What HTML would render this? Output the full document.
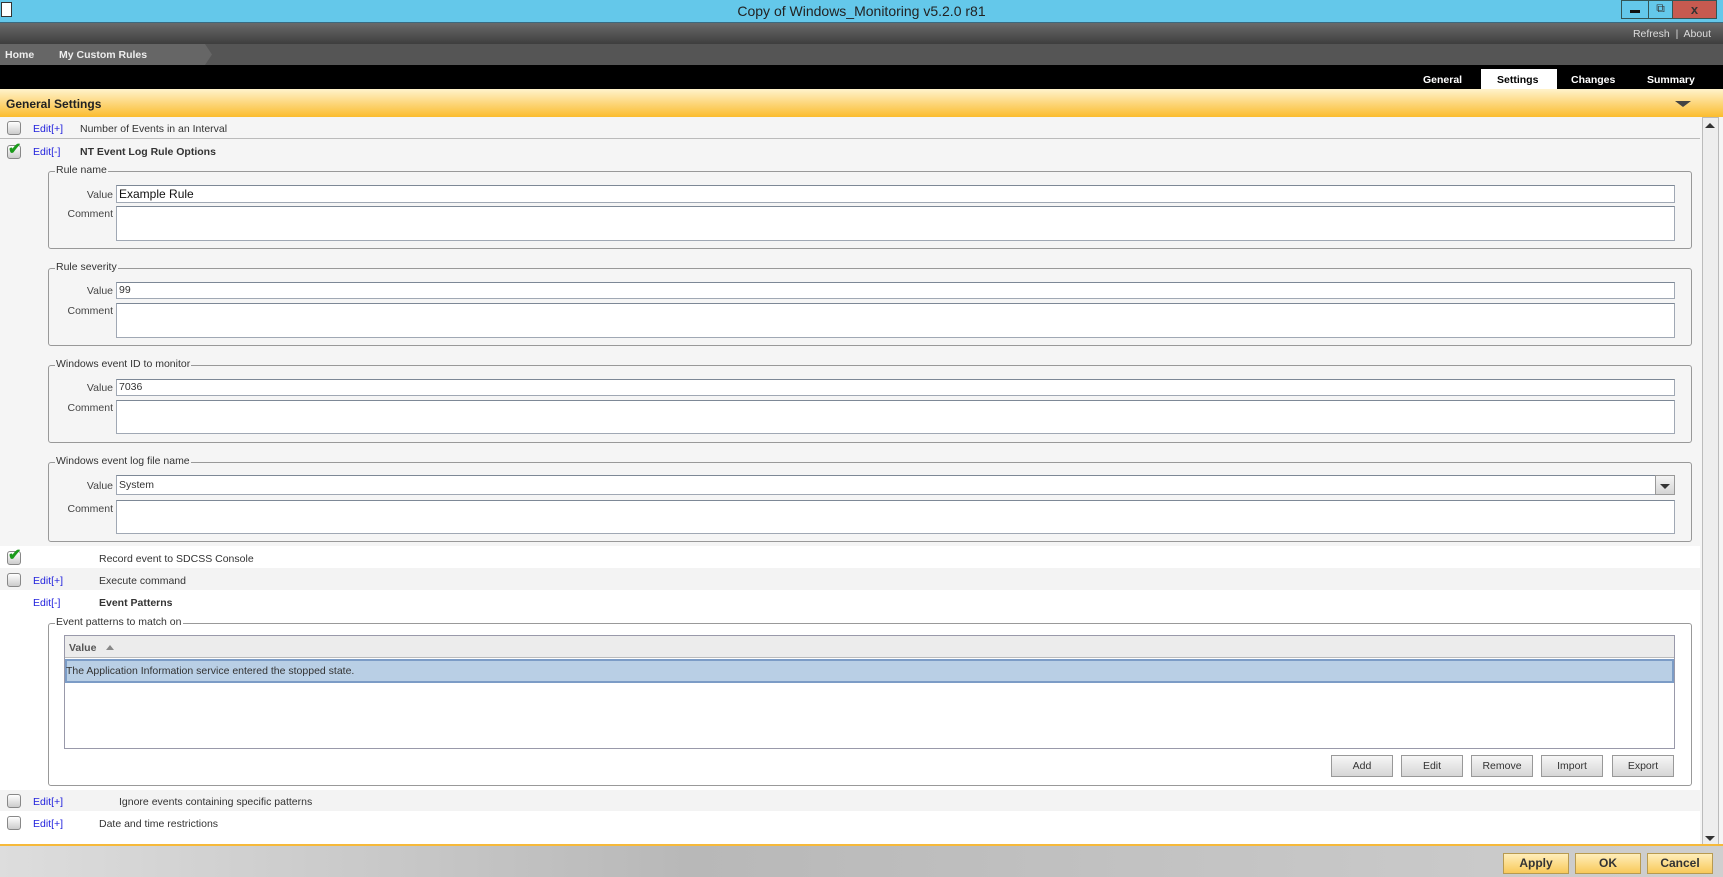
<!DOCTYPE html>
<html><head><meta charset="utf-8"><style>
*{box-sizing:border-box;margin:0;padding:0}
body{width:1723px;height:877px;position:relative;overflow:hidden;background:#f5f5f5;font-family:"Liberation Sans",Arial,sans-serif;font-size:10.5px;color:#333}
.a{position:absolute}
.cb{position:absolute;width:14px;height:14px;border:1px solid #888;border-radius:3px;background:linear-gradient(#fff,#ccc)}
.ck{position:absolute;color:#1a9a1a;font-size:16px;font-weight:bold;line-height:14px}
.ed{position:absolute;color:#2222dd;font-size:10.5px}
.lb{position:absolute;font-size:10.5px;color:#333}
.fs{position:absolute;left:48px;width:1644px;border:1px solid #999;border-radius:3px}
.lg{position:absolute;top:-8px;left:6px;background:#f5f5f5;padding:0 1px;font-size:10.5px;color:#333}
.inp{position:absolute;left:116px;width:1559px;background:#fff;border:1px solid #a0a8b4;border-top-color:#7d8896;font-size:10.5px;padding-left:2px}
.rl{position:absolute;width:113px;text-align:right;font-size:10.5px;color:#444}
.btn{position:absolute;top:755px;height:22px;width:62px;border:1px solid #999;background:linear-gradient(#f6f6f6,#d6d6d6);text-align:center;line-height:20px;font-size:10.5px;color:#333}
.ob{position:absolute;top:853px;height:21px;width:66px;border:1px solid #b89a50;background:linear-gradient(#ffeebb,#f8c95a);text-align:center;line-height:19px;font-size:12px;font-weight:bold;color:#333}
</style></head><body>
<div class="a" style="left:0;top:0;width:1723px;height:23px;background:#64c8ea;border-bottom:1px solid #3a6a80"></div>
<div class="a" style="left:1px;top:2px;width:11px;height:15px;border:1px solid #333;background:#fff"></div>
<div class="a" style="left:0;top:3px;width:1723px;text-align:center;font-size:14px;color:#222">Copy of Windows_Monitoring v5.2.0 r81</div>
<div class="a" style="left:1621px;top:0;width:28px;height:19px;border:1px solid #355"></div>
<div class="a" style="left:1630px;top:10px;width:10px;height:3px;background:#111"></div>
<div class="a" style="left:1648px;top:0;width:25px;height:19px;border:1px solid #355;text-align:center;font-size:12px">⧉</div>
<div class="a" style="left:1672px;top:0;width:45px;height:19px;background:#c75a50;border:1px solid #355;text-align:center;font-weight:bold;font-size:13px;line-height:17px">x</div>
<div class="a" style="left:0;top:23px;width:1723px;height:21px;background:linear-gradient(#6a6a6a,#3e3e3e)"></div>
<div class="a" style="right:12px;top:28px;color:#ddd;font-size:10.5px">Refresh &nbsp;|&nbsp; About</div>
<div class="a" style="left:0;top:44px;width:1723px;height:21px;background:#555"></div>
<div class="a" style="left:0;top:44px;width:212px;height:21px;background:#666;clip-path:polygon(0 0,205px 0,212px 50%,205px 100%,0 100%)"></div>
<div class="a" style="left:5px;top:49px;color:#eee;font-weight:bold;font-size:10.5px">Home</div>
<div class="a" style="left:59px;top:49px;color:#eee;font-weight:bold;font-size:10.5px">My Custom Rules</div>
<div class="a" style="left:0;top:65px;width:1723px;height:24px;background:#000"></div>
<div class="a" style="left:1481px;top:69px;width:76px;height:20px;background:#fff"></div>
<div class="a" style="left:1423px;top:74px;color:#fff;font-weight:bold;font-size:10.5px">General</div>
<div class="a" style="left:1497px;top:74px;color:#000;font-weight:bold;font-size:10.5px">Settings</div>
<div class="a" style="left:1571px;top:74px;color:#fff;font-weight:bold;font-size:10.5px">Changes</div>
<div class="a" style="left:1647px;top:74px;color:#fff;font-weight:bold;font-size:10.5px">Summary</div>
<div class="a" style="left:0;top:89px;width:1723px;height:28px;background:linear-gradient(#fff3cc,#fbbc2e)"></div>
<div class="a" style="left:6px;top:97px;font-weight:bold;font-size:12px;color:#222">General Settings</div>
<div class="a" style="left:1675px;top:101px;border-left:8px solid transparent;border-right:8px solid transparent;border-top:6px solid #444"></div>
<div class="a" style="left:1702px;top:117px;width:17px;height:728px;background:#eee;border:1px solid #bbb"></div>
<div class="a" style="left:1705px;top:123px;border-left:5px solid transparent;border-right:5px solid transparent;border-bottom:5px solid #333"></div>
<div class="a" style="left:1705px;top:836px;border-left:5px solid transparent;border-right:5px solid transparent;border-top:5px solid #333"></div>
<div class="a" style="left:0;top:117px;width:1700px;height:22px;border-bottom:1px solid #bbb"></div>
<div class="cb" style="left:7px;top:121px"></div><div class="ed" style="left:33px;top:123px">Edit[+]</div><div class="lb" style="left:80px;top:123px">Number of Events in an Interval</div>
<div class="cb" style="left:7px;top:145px"></div><div class="ck" style="left:8px;top:143px">✔</div><div class="ed" style="left:33px;top:146px">Edit[-]</div><div class="lb" style="left:80px;top:146px;font-weight:bold">NT Event Log Rule Options</div>

<div class="fs" style="top:171px;height:78px"><span class="lg">Rule name</span></div>
<div class="rl" style="left:0;top:189px">Value</div><div class="inp" style="top:185px;height:18px;font-size:12px;line-height:16px;color:#111">Example Rule</div>
<div class="rl" style="left:0;top:208px">Comment</div><div class="inp" style="top:206px;height:35px"></div>

<div class="fs" style="top:268px;height:78px"><span class="lg">Rule severity</span></div>
<div class="rl" style="left:0;top:285px">Value</div><div class="inp" style="top:282px;height:17px;line-height:15px">99</div>
<div class="rl" style="left:0;top:305px">Comment</div><div class="inp" style="top:303px;height:35px"></div>

<div class="fs" style="top:365px;height:78px"><span class="lg">Windows event ID to monitor</span></div>
<div class="rl" style="left:0;top:382px">Value</div><div class="inp" style="top:379px;height:17px;line-height:15px">7036</div>
<div class="rl" style="left:0;top:402px">Comment</div><div class="inp" style="top:400px;height:34px"></div>

<div class="fs" style="top:462px;height:80px"><span class="lg">Windows event log file name</span></div>
<div class="rl" style="left:0;top:480px">Value</div><div class="inp" style="top:475px;height:20px;line-height:18px;width:1540px">System</div>
<div class="a" style="left:1655px;top:475px;width:20px;height:20px;border:1px solid #999;background:linear-gradient(#f4f4f4,#d4d4d4)"></div>
<div class="a" style="left:1660px;top:484px;border-left:5px solid transparent;border-right:5px solid transparent;border-top:5px solid #333"></div>
<div class="rl" style="left:0;top:503px">Comment</div><div class="inp" style="top:500px;height:34px"></div>

<div class="a" style="left:0;top:546px;width:1700px;height:22px;background:#fff"></div>
<div class="cb" style="left:7px;top:551px"></div><div class="ck" style="left:8px;top:549px">✔</div><div class="lb" style="left:99px;top:553px">Record event to SDCSS Console</div>
<div class="a" style="left:0;top:568px;width:1700px;height:22px;background:#f3f3f3"></div>
<div class="cb" style="left:7px;top:573px"></div><div class="ed" style="left:33px;top:575px">Edit[+]</div><div class="lb" style="left:99px;top:575px">Execute command</div>
<div class="a" style="left:0;top:590px;width:1700px;height:200px;background:#fff"></div>
<div class="ed" style="left:33px;top:597px">Edit[-]</div><div class="lb" style="left:99px;top:597px;font-weight:bold">Event Patterns</div>

<div class="fs" style="top:623px;height:163px"><span class="lg" style="background:#fff">Event patterns to match on</span></div>
<div class="a" style="left:64px;top:635px;width:1611px;height:114px;border:1px solid #99a;background:#fff"></div>
<div class="a" style="left:65px;top:636px;width:1609px;height:22px;background:#ececec;border-bottom:1px solid #bbb"></div>
<div class="a" style="left:69px;top:642px;font-weight:bold;color:#555">Value</div>
<div class="a" style="left:106px;top:645px;border-left:4px solid transparent;border-right:4px solid transparent;border-bottom:5px solid #888"></div>
<div class="a" style="left:65px;top:659px;width:1609px;height:24px;background:#b9cfe5;border:2px solid #7c9cc6"></div>
<div class="a" style="left:66px;top:665px;color:#333">The Application Information service entered the stopped state.</div>
<div class="btn" style="left:1331px">Add</div><div class="btn" style="left:1401px">Edit</div><div class="btn" style="left:1471px">Remove</div><div class="btn" style="left:1541px">Import</div><div class="btn" style="left:1612px">Export</div>

<div class="a" style="left:0;top:790px;width:1700px;height:21px;background:#f3f3f3"></div>
<div class="cb" style="left:7px;top:794px"></div><div class="ed" style="left:33px;top:796px">Edit[+]</div><div class="lb" style="left:119px;top:796px">Ignore events containing specific patterns</div>
<div class="a" style="left:0;top:811px;width:1700px;height:34px;background:#fff"></div>
<div class="cb" style="left:7px;top:816px"></div><div class="ed" style="left:33px;top:818px">Edit[+]</div><div class="lb" style="left:99px;top:818px">Date and time restrictions</div>

<div class="a" style="left:0;top:844px;width:1723px;height:2px;background:#f6b93a"></div>
<div class="a" style="left:0;top:846px;width:1723px;height:31px;background:linear-gradient(90deg,#ddd,#b8b8b8 40%,#cfcfcf)"></div>
<div class="ob" style="left:1503px">Apply</div><div class="ob" style="left:1575px">OK</div><div class="ob" style="left:1647px">Cancel</div>
</body></html>
